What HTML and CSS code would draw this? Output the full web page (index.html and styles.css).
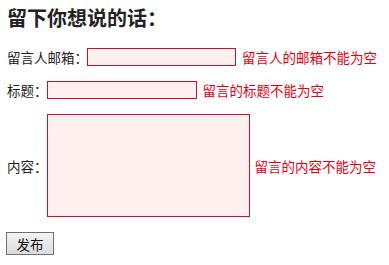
FILE: index.html
```html
<!DOCTYPE html>
<html lang="zh">
<head>
<meta charset="utf-8">
<title>留言</title>
<link rel="stylesheet" href="styles.css">
</head>
<body>
<form class="form">
  <h3 class="title">留下你想说的话：</h3>
  <div class="row">
    <label class="label">留言人邮箱：</label>
    <input class="field field-email" type="text">
    <span class="error">留言人的邮箱不能为空</span>
  </div>
  <div class="row">
    <label class="label">标题：</label>
    <input class="field field-title" type="text">
    <span class="error">留言的标题不能为空</span>
  </div>
  <div class="row">
    <label class="label">内容：</label>
    <textarea class="field field-content"></textarea>
    <span class="error error-content">留言的内容不能为空</span>
  </div>
  <div class="actions">
    <button class="submit" type="button">发布</button>
  </div>
</form>
</body>
</html>
```

FILE: styles.css
```css
html, body {
  margin: 0;
  padding: 0;
  background: #fff;
}
body {
  font-family: "Noto Sans CJK SC", "Noto Sans", sans-serif;
  font-size: 13.5px;
  color: #222;
}
.form {
  display: flex;
  flex-direction: column;
  gap: 15px;
  padding: 6px 0 0 6px;
}
.title {
  margin: 0 0 3px 1px;
  font-size: 20px;
  line-height: 24px;
  font-weight: bold;
  color: #222;
}
.row {
  display: flex;
  align-items: center;
}
.label {
  line-height: 18px;
  padding-left: 1px;
  margin-right: -1px;
}
.field {
  box-sizing: border-box;
  margin: 0;
  padding: 0 2px;
  border: 1px solid #c8102e;
  background: #fff0f0;
  font: inherit;
  outline: none;
}
.field-email {
  width: 149px;
  height: 18px;
}
.field-title {
  width: 150px;
  height: 18px;
}
.field-content {
  width: 203px;
  height: 103px;
  resize: none;
}
.error {
  margin-left: 6px;
  color: #e60012;
  line-height: 18px;
  white-space: nowrap;
}
.error-content {
  margin-left: 5px;
}
.actions {
  display: flex;
}
.submit {
  box-sizing: border-box;
  width: 48px;
  height: 23px;
  margin: 0;
  padding: 0;
  border: 1px solid #707070;
  border-radius: 0;
  background: linear-gradient(#f4f4f4, #dcdcdc);
  font: inherit;
  color: #111;
  line-height: 20px;
}
```
